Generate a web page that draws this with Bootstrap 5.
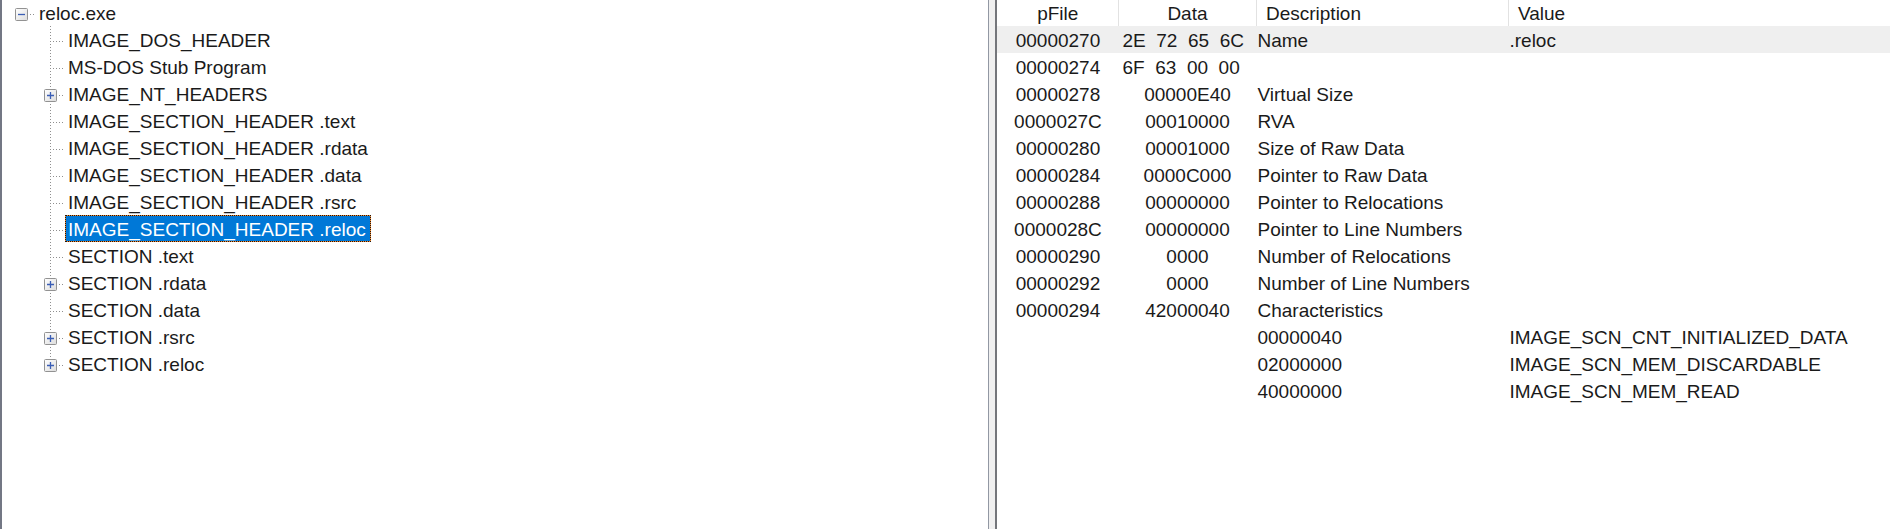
<!DOCTYPE html>
<html lang="en">
<head>
<meta charset="utf-8">
<meta name="viewport" content="width=device-width, initial-scale=1">
<title>reloc.exe</title>
<link href="https://cdn.jsdelivr.net/npm/bootstrap@5.3.0/dist/css/bootstrap.min.css" rel="stylesheet">
<style>
  body { font: 19px/25px "Liberation Sans", Arial, sans-serif; color: #1a1a1a; }
  .tree-pane { flex: 0 0 52.3%; border-left: 2px solid #737784; }
  .splitter { flex: 0 0 9px; background: #f0f0f0; border-left: 1px solid #9298a3; border-right: 2px solid #74767b; }
  .tree-row { height: 27px; }
  .root-row { height: 26px; padding-left: 13px; }
  .branch { padding-left: 42px; }
  .guide { width: 21px; height: 27px; padding-top: 9px; flex: none;
    background:
      repeating-linear-gradient(to bottom, #8f8f8f 0 1px, transparent 1px 3px) 6px 0 / 1px 100% no-repeat,
      repeating-linear-gradient(to right, #8f8f8f 0 1px, transparent 1px 3px) 6px 15px / 13px 1px no-repeat; }
  .guide-root { height: 26px; background: repeating-linear-gradient(to right, #8f8f8f 0 1px, transparent 1px 3px) 6px 14px / 13px 1px no-repeat; }
  .guide-root { padding-top: 8px; }
  .tree-row:last-child .guide { background-size: 1px 15px, 13px 1px; }
  .toggle { display: block; width: 14px; height: 14px; padding: 0; border: 0; background: none; line-height: 0; }
  .node-label { padding: 2px 5px 0 3px; white-space: nowrap; }
  .root-row .node-label { line-height: 24px; }
  .node-label.active { background: #0078d7; color: #fff; outline: 1px dotted #22160c; outline-offset: -1px; box-shadow: inset 0 0 0 1px #f08a35; }
  .fields { table-layout: fixed; }
  .fields th { height: 26px; line-height: 24px; font-weight: 400; padding: 2px 0 0; border-right: 1px solid #e2e2e2; }
  .fields th:last-child { border-right: 0; }
  .fields td { height: 27px; padding: 2px 0 0; white-space: pre; }
  .fields td + td + td { padding-left: 1px; }
  .fields td.bytes { padding-left: 4px; }
  .fields th.text-start { padding-left: 9px; }
  .col-offset { width: 121px; }
  .col-data { width: 138px; }
  .col-desc { width: 252px; }
  .picked { background: #efefef; }
</style>
</head>
<body class="bg-white">
<main class="d-flex min-vh-100">
  <nav class="tree-pane" aria-label="File structure">
    <div class="root-row d-flex">
      <span class="guide guide-root"><button class="toggle" aria-label="Collapse reloc.exe">
        <svg width="14" height="14" viewBox="0 0 14 14"><defs><linearGradient id="face" x2="1" y2="1"><stop stop-color="#fff"/><stop offset="1" stop-color="#dcdcdc"/></linearGradient></defs><rect x=".5" y=".5" width="12" height="12" rx="1" fill="url(#face)" stroke="#929292"/><path d="M3 6.5h7" stroke="#3b5eb5" stroke-width="1.3"/></svg>
      </button></span>
      <span class="node-label">reloc.exe</span>
    </div>
    <ul class="branch list-unstyled mb-0" id="branch"></ul>
  </nav>
  <div class="splitter" role="separator" aria-orientation="vertical"></div>
  <section class="flex-grow-1 overflow-hidden" aria-label="Header fields">
    <table class="fields w-100">
      <colgroup><col class="col-offset"><col class="col-data"><col class="col-desc"><col></colgroup>
      <thead><tr><th class="text-center">pFile</th><th class="text-center">Data</th><th class="text-start">Description</th><th class="text-start">Value</th></tr></thead>
      <tbody class="text-center">
        <tr class="picked"><td>00000270</td><td class="text-start bytes">2E  72  65  6C</td><td class="text-start">Name</td><td class="text-start">.reloc</td></tr>
        <tr><td>00000274</td><td class="text-start bytes">6F  63  00  00</td><td></td><td></td></tr>
        <tr><td>00000278</td><td>00000E40</td><td class="text-start">Virtual Size</td><td></td></tr>
        <tr><td>0000027C</td><td>00010000</td><td class="text-start">RVA</td><td></td></tr>
        <tr><td>00000280</td><td>00001000</td><td class="text-start">Size of Raw Data</td><td></td></tr>
        <tr><td>00000284</td><td>0000C000</td><td class="text-start">Pointer to Raw Data</td><td></td></tr>
        <tr><td>00000288</td><td>00000000</td><td class="text-start">Pointer to Relocations</td><td></td></tr>
        <tr><td>0000028C</td><td>00000000</td><td class="text-start">Pointer to Line Numbers</td><td></td></tr>
        <tr><td>00000290</td><td>0000</td><td class="text-start">Number of Relocations</td><td></td></tr>
        <tr><td>00000292</td><td>0000</td><td class="text-start">Number of Line Numbers</td><td></td></tr>
        <tr><td>00000294</td><td>42000040</td><td class="text-start">Characteristics</td><td></td></tr>
        <tr><td></td><td></td><td class="text-start">00000040</td><td class="text-start">IMAGE_SCN_CNT_INITIALIZED_DATA</td></tr>
        <tr><td></td><td></td><td class="text-start">02000000</td><td class="text-start">IMAGE_SCN_MEM_DISCARDABLE</td></tr>
        <tr><td></td><td></td><td class="text-start">40000000</td><td class="text-start">IMAGE_SCN_MEM_READ</td></tr>
      </tbody>
    </table>
  </section>
</main>
<script src="https://cdn.jsdelivr.net/npm/bootstrap@5.3.0/dist/js/bootstrap.bundle.min.js"></script>
<script>
  // [label, has children, selected]
  const nodes = [
    ['IMAGE_DOS_HEADER'], ['MS-DOS Stub Program'], ['IMAGE_NT_HEADERS', true],
    ['IMAGE_SECTION_HEADER .text'], ['IMAGE_SECTION_HEADER .rdata'], ['IMAGE_SECTION_HEADER .data'],
    ['IMAGE_SECTION_HEADER .rsrc'], ['IMAGE_SECTION_HEADER .reloc', false, true],
    ['SECTION .text'], ['SECTION .rdata', true], ['SECTION .data'], ['SECTION .rsrc', true], ['SECTION .reloc', true]
  ];
  document.getElementById('branch').innerHTML = nodes.map(([label, open, active]) => `
    <li class="tree-row d-flex"><span class="guide">${open ? `<button class="toggle" aria-label="Expand ${label}"><svg width="14" height="14" viewBox="0 0 14 14"><rect x=".5" y=".5" width="12" height="12" rx="1" fill="url(#face)" stroke="#929292"/><path d="M3 6.5h7M6.5 3v7" stroke="#3b5eb5" stroke-width="1.3"/></svg></button>` : ''}</span><span class="node-label${active ? ' active' : ''}">${label}</span></li>`).join('');
</script>
</body>
</html>
